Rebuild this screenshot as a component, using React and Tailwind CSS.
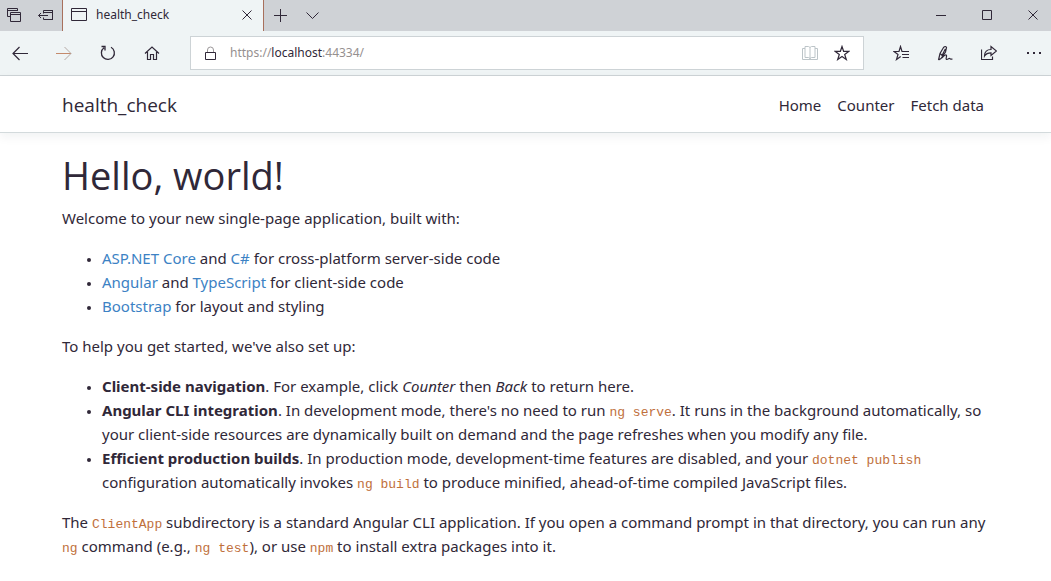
const ico = { fill: "none", stroke: "currentColor", "aria-hidden": true };

function Icon({ size = 16, width = 1, children }) {
  return (
    <svg {...ico} strokeWidth={width} width={size} height={size} viewBox={`0 0 ${size} ${size}`} className="shrink-0">
      {children}
    </svg>
  );
}

function IconButton({ label, className = "", children }) {
  return (
    <button type="button" aria-label={label} className={`flex shrink-0 items-center ${className}`}>
      {children}
    </button>
  );
}

function Code({ children }) {
  return <code className="font-['Liberation_Mono',monospace] text-[13px] leading-none text-[#c0703c]">{children}</code>;
}

function Link({ href, children }) {
  return <a href={href} className="text-[#3c82c4]">{children}</a>;
}

function TabStrip() {
  return (
    <div className="flex h-[31px] items-stretch bg-[#cfd2d6]">
      <IconButton label="Tabs you've set aside" className="w-7 justify-center pb-px">
        <Icon>
          <path d="M4 9.5H1.5V1.5H11.5V4M1.5 3.5H11.5" />
          <path d="M4.5 5.5H14.5V14.5H4.5ZM4.5 7.5H14.5" />
        </Icon>
      </IconButton>
      <IconButton label="Set these tabs aside" className="w-[34px] justify-center pb-px">
        <Icon>
          <path d="M6.5 6.5V3.5H16V12.5H6.5V10.5M6.5 5.5H16M15.5 3.5V12.5M1.5 8.5H11M4 6L1.5 8.5L4 11" />
        </Icon>
      </IconButton>
      <div className="flex w-[202px] items-center border-x border-[#a8705c] bg-[#eff4f5] pb-px pl-2">
        <Icon>
          <path d="M0.5 1.5H15.5V13.5H0.5ZM0.5 4.5H15.5" />
        </Icon>
        <span className="ml-[9px] flex-1 text-xs">health_check</span>
        <IconButton label="Close tab" className="w-8 justify-center">
          <Icon size={10}><path d="M0.5 0.5L9.5 9.5M9.5 0.5L0.5 9.5" /></Icon>
        </IconButton>
      </div>
      <IconButton label="New tab" className="w-[33px] justify-center">
        <Icon size={13}><path d="M6.5 0V13M0 6.5H13" /></Icon>
      </IconButton>
      <IconButton label="Show tab previews" className="w-[31px] justify-center">
        <Icon size={13}><path d="M0.5 3.5L6.5 9.5L12.5 3.5" /></Icon>
      </IconButton>
      <div className="flex-1" />
      <IconButton label="Minimize" className="w-[46px] justify-center pb-px">
        <Icon size={10}><path d="M0 5.5H10" /></Icon>
      </IconButton>
      <IconButton label="Maximize" className="w-[46px] justify-center pb-px">
        <Icon size={10}><path d="M0.5 0.5H9.5V9.5H0.5Z" /></Icon>
      </IconButton>
      <IconButton label="Close" className="w-[41px] pb-px pl-[18px]">
        <Icon size={10}><path d="M0.5 0.5L9.5 9.5M9.5 0.5L0.5 9.5" /></Icon>
      </IconButton>
    </div>
  );
}

function Toolbar() {
  return (
    <div className="flex h-[45px] items-center border-b border-[#cdd3d6] bg-[#eff4f5]">
      <IconButton label="Back" className="h-full w-10 justify-center">
        <Icon width={1.2}><path d="M1 8.5H16M7.5 2L1 8.5L7.5 15" /></Icon>
      </IconButton>
      <IconButton label="Forward" className="h-full w-12 justify-center text-[#b5aaa6]">
        <Icon><path d="M0 8.5H15" stroke="#c48a6c" /><path d="M8.5 2L15 8.5L8.5 15" /></Icon>
      </IconButton>
      <IconButton label="Refresh" className="h-full w-10 justify-center">
        <Icon width={1.3}><path d="M4 2.7A6.5 6.5 0 1 0 11 2.2M1.5 1.5H5V5.5" /></Icon>
      </IconButton>
      <IconButton label="Home" className="h-full w-12 justify-center">
        <Icon width={1.2}><path d="M1 8.5L8 2L15 8.5M3.5 7V14.5H6.5V9.5H9.5V14.5H12.5V7" /></Icon>
      </IconButton>
      <div className="ml-[14px] flex h-[34px] flex-1 items-center border border-[#cdd3d6] bg-white">
        <span className="flex w-[39px] justify-center">
          <Icon size={15}>
            <path d="M4.5 6V4A3 3 0 0 1 10.5 4V6" stroke="#9a9698" />
            <path d="M2.5 6.5H12.5V13.5H2.5Z" />
          </Icon>
        </span>
        <a href="https://localhost:44334/" className="flex-1 text-xs text-[#96908f]">
          https://<span className="text-[#302838]">localhost</span>:44334/
        </a>
        <IconButton label="Reading view" className="h-full w-8 justify-center text-[#bcc4c8]">
          <Icon><path d="M3 1.5H6.5L8 2.5L9.5 1.5H13V12.5H9.5L8 13.5L6.5 12.5H3ZM8 2.5V14M3 3.5H0.5V14.5H15.5V3.5H13" /></Icon>
        </IconButton>
        <IconButton label="Add to favorites" className="mr-[5px] h-full w-8 justify-center">
          <Icon width={1.2}><path d="M8 1.5L9.6 6.3H15L10.7 9.4L12.3 14.5L8 11.4L3.7 14.5L5.3 9.4L1 6.3H6.4Z" /></Icon>
        </IconButton>
      </div>
      <IconButton label="Favorites" className="ml-[15px] h-full w-11 justify-center">
        <Icon width={1.2}><path d="M16 6.5H9L7.5 1.5L6 6.5H1L5 9.4L3.5 14.5L7.7 11.4M9 9.5H16M9.5 12.5H16" /></Icon>
      </IconButton>
      <IconButton label="Add notes" className="h-full w-11 justify-center">
        <Icon width={1.2}><path d="M1.5 15L3 8.5L6.5 2.5Q8.5 0.5 9.5 2.5L8.5 7L4 13.5L1.5 15M3 8.5L5.5 10.5M4.8 11L8.3 4M5 13C7.5 9.5 10 9 9.5 11.5C8.5 15 9.5 15 12 13.5C13 13 13 14.5 15.5 14" /></Icon>
      </IconButton>
      <IconButton label="Share" className="h-full w-11 justify-center">
        <Icon width={1.2}><path d="M0.5 4.5V14.5H11.5V11.5M3.5 11C3.5 6.5 6 4.5 10 4.5V1.5L15.5 6L10 10.5V7.8C7 7.8 5 8.5 3.5 11Z" /></Icon>
      </IconButton>
      <IconButton label="Settings and more" className="h-full w-10 pl-[15px]">
        <Icon><path d="M1 8H3M7 8H9M13 8H15" strokeWidth="2" /></Icon>
      </IconButton>
    </div>
  );
}

export default function App() {
  return (
    <div className="bg-white font-['Noto_Sans',sans-serif] text-[15px] leading-6 text-[#302838]">
      <TabStrip />
      <Toolbar />
      <header className="border-b border-[#d3dadc] shadow-[0_4px_10px_rgba(0,40,50,0.06)]">
        <nav className="flex h-14 items-center justify-between px-[62px] pt-0.5">
          <a href="#home" className="font-['Open_Sans',sans-serif] text-[19px]">health_check</a>
          <div className="flex gap-4 pr-[5px]">
            <a href="#home">Home</a>
            <a href="#counter">Counter</a>
            <a href="#fetch-data">Fetch data</a>
          </div>
        </nav>
      </header>
      <main className="px-[62px] pt-[19px]">
        <h1 className="mb-2 font-['Open_Sans',sans-serif] text-[38px] leading-[46px]">Hello, world!</h1>
        <p className="mb-4">Welcome to your new single-page application, built with:</p>
        <ul className="mb-4 list-disc pl-10 marker:text-[11px]">
          <li><Link href="https://get.asp.net/">ASP.NET Core</Link> and <Link href="https://docs.microsoft.com/dotnet/csharp">C#</Link> for cross-platform server-side code</li>
          <li><Link href="https://angular.io/">Angular</Link> and <Link href="https://www.typescriptlang.org/">TypeScript</Link> for client-side code</li>
          <li><Link href="https://getbootstrap.com/">Bootstrap</Link> for layout and styling</li>
        </ul>
        <p className="mb-4">To help you get started, we've also set up:</p>
        <ul className="mb-4 list-disc pl-10 marker:text-[11px]">
          <li><strong>Client-side navigation</strong>. For example, click <em>Counter</em> then <em>Back</em> to return here.</li>
          <li><strong>Angular CLI integration</strong>. In development mode, there's no need to run <Code>ng serve</Code>. It runs in the background automatically, so your client-side resources are dynamically built on demand and the page refreshes when you modify any file.</li>
          <li><strong>Efficient production builds</strong>. In production mode, development-time features are disabled, and your <Code>dotnet publish</Code> configuration automatically invokes <Code>ng build</Code> to produce minified, ahead-of-time compiled JavaScript files.</li>
        </ul>
        <p>The <Code>ClientApp</Code> subdirectory is a standard Angular CLI application. If you open a command prompt in that directory, you can run any <Code>ng</Code> command (e.g., <Code>ng test</Code>), or use <Code>npm</Code> to install extra packages into it.</p>
      </main>
    </div>
  );
}
